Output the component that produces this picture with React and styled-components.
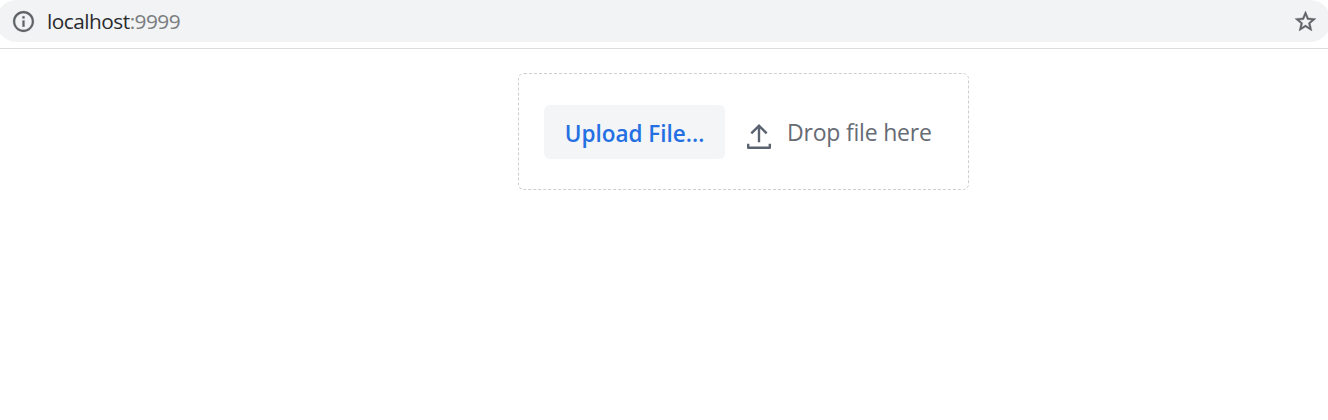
import React from "react";
import styled, { createGlobalStyle } from "styled-components";

const GlobalStyle = createGlobalStyle`
  body {
    margin: 0;
    background: #fff;
    overflow: hidden;
    font-family: "Open Sans", "Noto Sans", sans-serif;
  }
`;

const Page = styled.div`
  height: 420px;
  overflow: hidden;
`;

const Toolbar = styled.header`
  box-sizing: border-box;
  height: 49px;
  border-bottom: 1px solid #d9dbde;
`;

const AddressBar = styled.div`
  box-sizing: border-box;
  height: 42px;
  margin: 0 -3px 0 -4px;
  padding: 0 13px 0 15px;
  display: flex;
  align-items: center;
  border-radius: 21px;
  background: #f1f3f4;
  color: #5f6368;
`;

const Glyph = styled.svg`
  display: block;
  flex: none;
`;

const Address = styled.div`
  flex: 1;
  margin-left: 11px;
  font-size: 20.8px;
  line-height: 42px;
  letter-spacing: -0.5px;
  color: #7a7d80;
`;

const Host = styled.span`
  color: #2a2b2e;
`;

const Content = styled.main`
  display: flex;
  padding: 24px 0 0 518px;
`;

const DropZone = styled.section`
  box-sizing: border-box;
  width: 451px;
  height: 117px;
  padding: 0 25px 0 25px;
  display: flex;
  align-items: center;
  border: 1px dashed #cdced0;
  border-radius: 6px;
`;

const UploadButton = styled.button`
  width: 181px;
  height: 54px;
  padding: 3px 0 0;
  border: 0;
  border-radius: 6px;
  background: #f3f5f7;
  color: #2470e3;
  font: 600 22.5px/51px "Open Sans", sans-serif;
  letter-spacing: 0;
  white-space: nowrap;
`;

const DropHint = styled.div`
  display: flex;
  align-items: center;
  margin-left: 21px;
  color: #5c6370;
`;

const DropLabel = styled.span`
  margin-left: 15px;
  padding-top: 1px;
  font-size: 23px;
  line-height: 54px;
  letter-spacing: -0.2px;
  color: #666b74;
  white-space: nowrap;
`;

export default function App() {
  return (
    <>
      <GlobalStyle />
      <Page>
        <Toolbar>
          <AddressBar>
            <Glyph width="25" height="25" viewBox="0 0 24 24" fill="currentColor" stroke="currentColor" strokeWidth="0.2">
              <path d="M11 7h2v2h-2zm0 4h2v6h-2zm1-9C6.48 2 2 6.48 2 12s4.48 10 10 10 10-4.48 10-10S17.52 2 12 2zm0 18c-4.41 0-8-3.59-8-8s3.59-8 8-8 8 3.59 8 8-3.59 8-8 8z" />
            </Glyph>
            <Address>
              <Host>localhost</Host>:9999
            </Address>
            <Glyph width="25" height="25" viewBox="0 0 24 24" fill="currentColor" stroke="currentColor" strokeWidth="0.4">
              <path d="M22 9.24l-7.19-.62L12 2 9.19 8.63 2 9.24l5.46 4.73L5.82 21 12 17.27 18.18 21l-1.63-7.03L22 9.24zM12 15.4l-3.76 2.27 1-4.28-3.32-2.88 4.38-.38L12 6.1l1.71 4.04 4.38.38-3.32 2.88 1 4.28L12 15.4z" />
            </Glyph>
          </AddressBar>
        </Toolbar>
        <Content>
          <DropZone>
            <UploadButton>Upload File...</UploadButton>
            <DropHint>
              <Glyph width="26" height="36" viewBox="0 0 26 36" fill="none" stroke="currentColor" strokeWidth="2.4">
                <path d="M13 28.2V12M5.3 19.3L13 11.8l7.7 7.5" />
                <path d="M2.2 29.8v4h21.6v-4" strokeLinejoin="round" />
              </Glyph>
              <DropLabel>Drop file here</DropLabel>
            </DropHint>
          </DropZone>
        </Content>
      </Page>
    </>
  );
}
